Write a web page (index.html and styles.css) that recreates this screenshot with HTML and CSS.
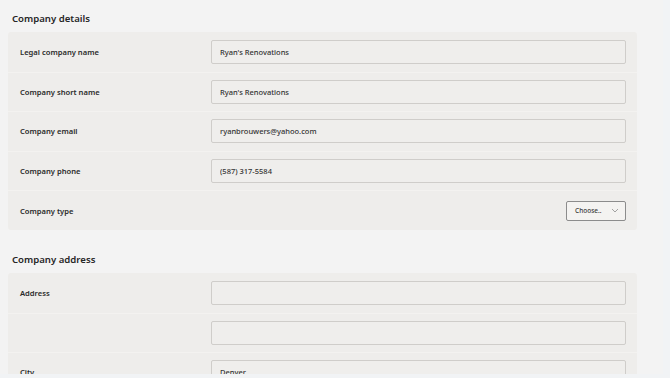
FILE: index.html
```html
<!DOCTYPE html>
<html lang="en">
<head>
    <meta charset="UTF-8">
    <meta name="viewport" content="width=device-width, initial-scale=1.0">
    <title>Company settings</title>
    <link rel="stylesheet" href="styles.css">
</head>
<body>
    <div class="page">
        <h2 class="section-title">Company details</h2>
        <div class="panel">
            <div class="row">
                <label for="legalName">Legal company name</label>
                <input type="text" id="legalName" value="Ryan's Renovations">
            </div>
            <div class="row">
                <label for="shortName">Company short name</label>
                <input type="text" id="shortName" value="Ryan's Renovations">
            </div>
            <div class="row">
                <label for="email">Company email</label>
                <input type="text" id="email" value="ryanbrouwers@yahoo.com">
            </div>
            <div class="row">
                <label for="phone">Company phone</label>
                <input type="text" id="phone" value="(587) 317-5584">
            </div>
            <div class="row">
                <label>Company type</label>
                <div class="select-wrap">
                    <button type="button" class="select">
                        <span>Choose..</span>
                        <svg width="8" height="5" viewBox="0 0 8 5"><path d="M1 1l3 3 3-3" fill="none" stroke="#8d8d8d" stroke-width="0.8"/></svg>
                    </button>
                </div>
            </div>
        </div>

        <h2 class="section-title spaced">Company address</h2>
        <div class="panel">
            <div class="row">
                <label for="address1">Address</label>
                <input type="text" id="address1" value="">
            </div>
            <div class="row">
                <label for="address2"></label>
                <input type="text" id="address2" value="">
            </div>
            <div class="row">
                <label for="city">City</label>
                <input type="text" id="city" value="Denver">
            </div>
        </div>
    </div>
</body>
</html>
```

FILE: styles.css
```css
* {
    margin: 0;
    padding: 0;
    box-sizing: border-box;
    font-family: 'Noto Sans', sans-serif;
}

body {
    background: #f1f3f5;
    width: 670px;
    height: 378px;
    overflow: hidden;
}

.page {
    width: 663px;
    height: 374px;
    overflow: hidden;
    background: #f3f3f3;
    padding-left: 8px;
}

.section-title {
    height: 32px;
    padding: 12px 0 0 4px;
    font-size: 9.6px;
    line-height: 13px;
    font-weight: 600;
    color: #262626;
}

.section-title.spaced {
    margin-top: 11px;
}

.panel {
    width: 629px;
    background: #eeedeb;
    border-radius: 3px;
}

.row {
    display: grid;
    grid-template-columns: 191px 1fr;
    align-items: center;
    height: 39.6px;
    padding: 0 11px 0 12px;
    border-top: 1px solid #f3f2f0;
}

.row:first-child {
    border-top: none;
}

label {
    font-size: 7.6px;
    font-weight: 600;
    color: #2a2a2a;
}

input {
    width: 100%;
    height: 24px;
    padding: 0 8px;
    border: 1px solid #cfcdca;
    border-radius: 2px;
    background: #efeeec;
    font-size: 7.5px;
    font-weight: 500;
    color: #333;
}

input:focus {
    outline: none;
    border-color: #9a9893;
}

.select-wrap {
    display: flex;
    justify-content: flex-end;
}

.select {
    display: flex;
    align-items: center;
    justify-content: space-between;
    width: 60px;
    height: 20px;
    padding: 0 6px 0 8px;
    border: 1px solid #8c8c8c;
    border-radius: 2px;
    background: #f4f3f1;
    font-size: 6.5px;
    font-weight: 500;
    color: #3a3a3a;
    cursor: pointer;
}
```
